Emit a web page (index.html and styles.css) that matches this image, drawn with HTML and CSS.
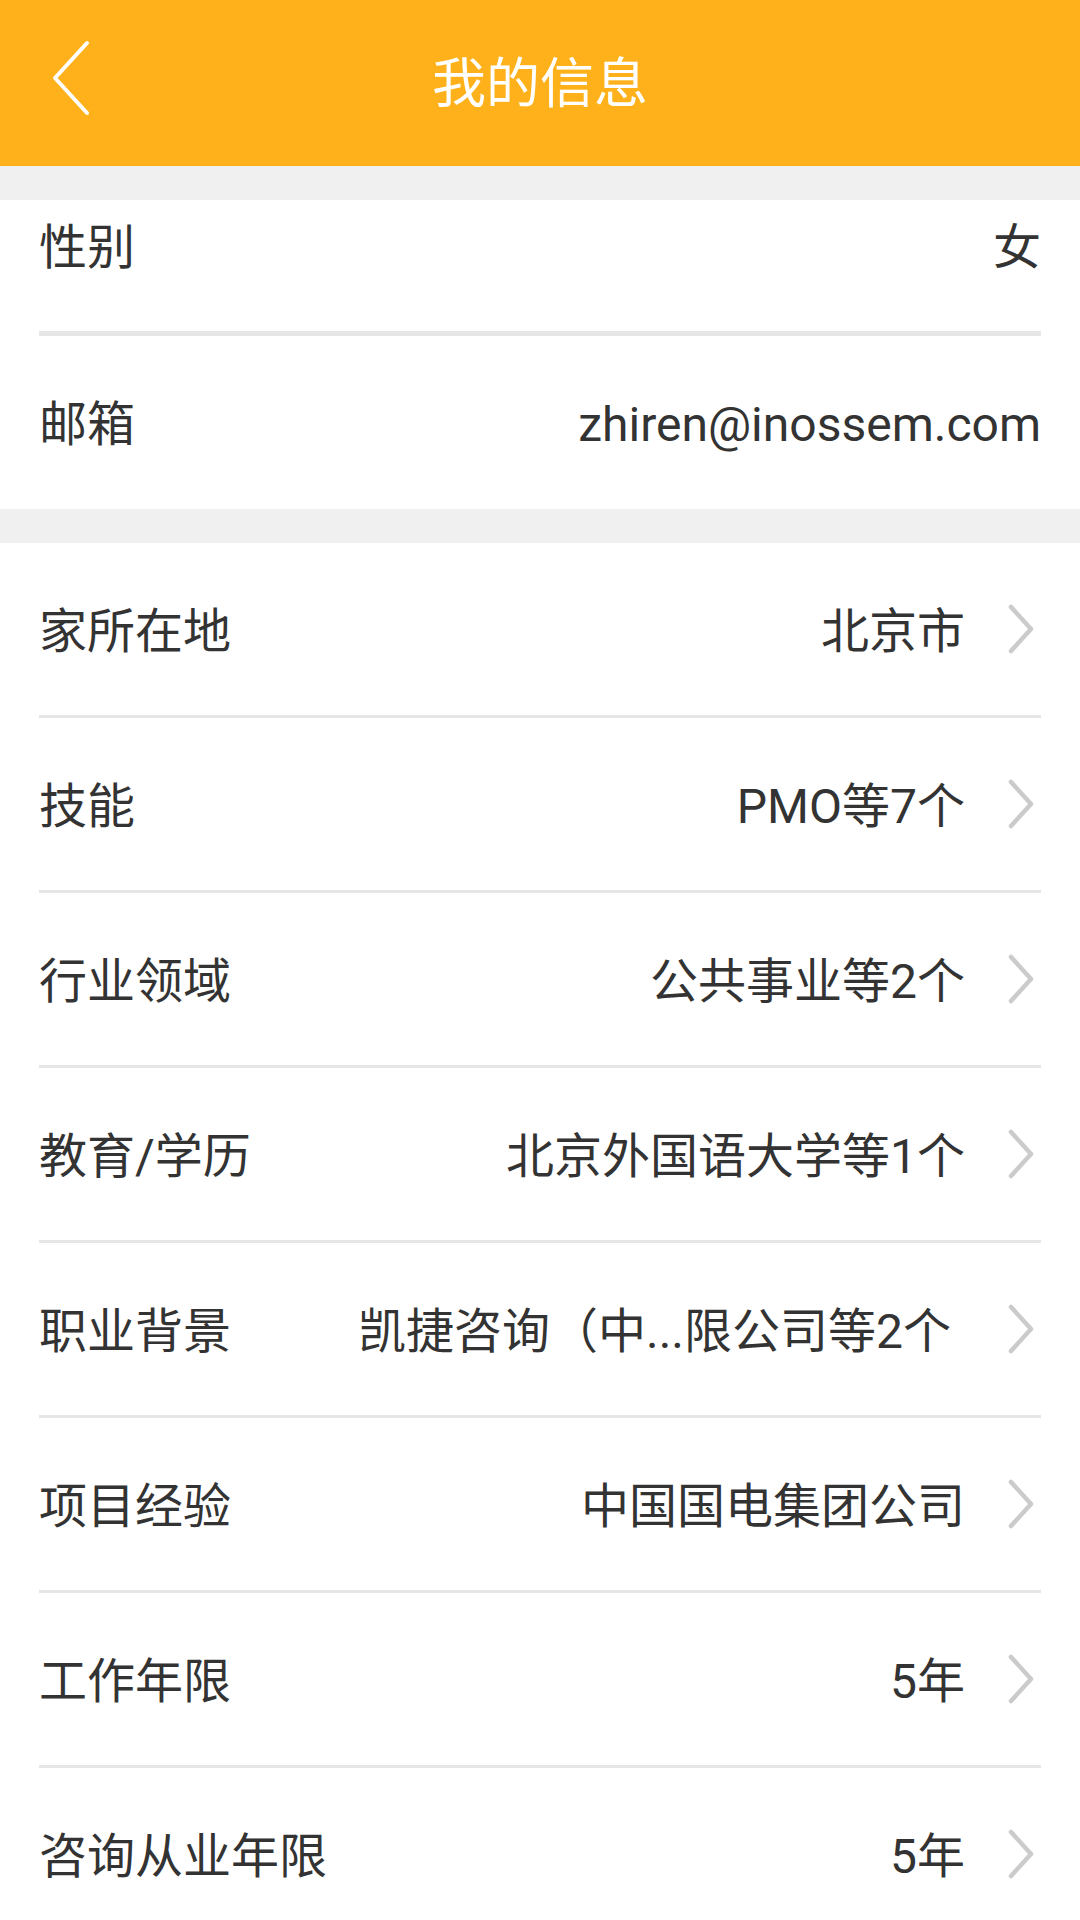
FILE: index.html
```html
<!DOCTYPE html>
<html lang="zh-CN">
<head>
    <meta charset="UTF-8">
    <meta name="viewport" content="width=device-width, initial-scale=1.0">
    <title>我的信息</title>
    <link rel="stylesheet" href="styles.css">
</head>
<body>
    <header class="topbar">
        <a class="back" href="#">
            <svg width="42" height="90" viewBox="0 0 42 90"><path d="M37 5 L5 40 L37 75" fill="none" stroke="#fff" stroke-width="4" stroke-linecap="round" stroke-linejoin="round"/></svg>
        </a>
        <h1 class="title">我的信息</h1>
        <span></span>
    </header>

    <section class="group group-top">
        <div class="row row-first">
            <span class="label">性别</span>
            <span class="value">女</span>
        </div>
        <div class="row">
            <span class="label">邮箱</span>
            <span class="value">zhiren@inossem.com</span>
        </div>
    </section>

    <section class="group group-list">
        <div class="row">
            <span class="label">家所在地</span>
            <span class="value">北京市</span>
            <svg class="arrow" width="34" height="56" viewBox="0 0 34 56"><path d="M4 6 L24 28 L4 50"/></svg>
        </div>
        <div class="row">
            <span class="label">技能</span>
            <span class="value">PMO等7个</span>
            <svg class="arrow" width="34" height="56" viewBox="0 0 34 56"><path d="M4 6 L24 28 L4 50"/></svg>
        </div>
        <div class="row">
            <span class="label">行业领域</span>
            <span class="value">公共事业等2个</span>
            <svg class="arrow" width="34" height="56" viewBox="0 0 34 56"><path d="M4 6 L24 28 L4 50"/></svg>
        </div>
        <div class="row">
            <span class="label">教育/学历</span>
            <span class="value">北京外国语大学等1个</span>
            <svg class="arrow" width="34" height="56" viewBox="0 0 34 56"><path d="M4 6 L24 28 L4 50"/></svg>
        </div>
        <div class="row">
            <span class="label">职业背景</span>
            <span class="value value-cut">凯捷咨询（中...限公司等2个</span>
            <svg class="arrow" width="34" height="56" viewBox="0 0 34 56"><path d="M4 6 L24 28 L4 50"/></svg>
        </div>
        <div class="row">
            <span class="label">项目经验</span>
            <span class="value">中国国电集团公司</span>
            <svg class="arrow" width="34" height="56" viewBox="0 0 34 56"><path d="M4 6 L24 28 L4 50"/></svg>
        </div>
        <div class="row">
            <span class="label">工作年限</span>
            <span class="value">5年</span>
            <svg class="arrow" width="34" height="56" viewBox="0 0 34 56"><path d="M4 6 L24 28 L4 50"/></svg>
        </div>
        <div class="row">
            <span class="label">咨询从业年限</span>
            <span class="value">5年</span>
            <svg class="arrow" width="34" height="56" viewBox="0 0 34 56"><path d="M4 6 L24 28 L4 50"/></svg>
        </div>
    </section>
</body>
</html>
```

FILE: styles.css
```css
body{
    margin: 0;
    height: 1920px;
    overflow: hidden;
    background: #f0f0f0;
    font-family: Roboto, "Noto Sans CJK SC", sans-serif;
    color: #333;
}
.topbar{
    height: 166px;
    background: #feb11a;
    display: grid;
    grid-template-columns: 1fr auto 1fr;
    align-items: center;
}
.back{
    display: flex;
    padding-left: 50px;
}
.title{
    margin: 0 0 8px;
    font-size: 54px;
    font-weight: normal;
    color: #fff;
}
.group{
    margin-top: 34px;
    background: #fff;
    padding: 0 39px;
}
.row{
    display: flex;
    align-items: center;
    height: 167px;
    padding-top: 5px;
    font-size: 48px;
    line-height: 1;
}
.group-top .row + .row{
    border-top: 5px solid #e6e6e6;
}
.group-top .row:last-child{
    height: 168px;
}
.group-list .row + .row{
    border-top: 3px solid #e6e6e6;
}
.row-first{
    height: 131px;
    align-items: flex-start;
    padding-top: 24px;
    box-sizing: border-box;
}
.value{
    margin-left: auto;
}
.group-list .value{
    margin-right: 42px;
}
.group-list .value-cut{
    margin-right: 56px;
}
.arrow{
    margin-top: -5px;
}
.arrow path{
    fill: none;
    stroke: #cbcbcb;
    stroke-width: 4.5;
    stroke-linecap: round;
    stroke-linejoin: round;
}
```
